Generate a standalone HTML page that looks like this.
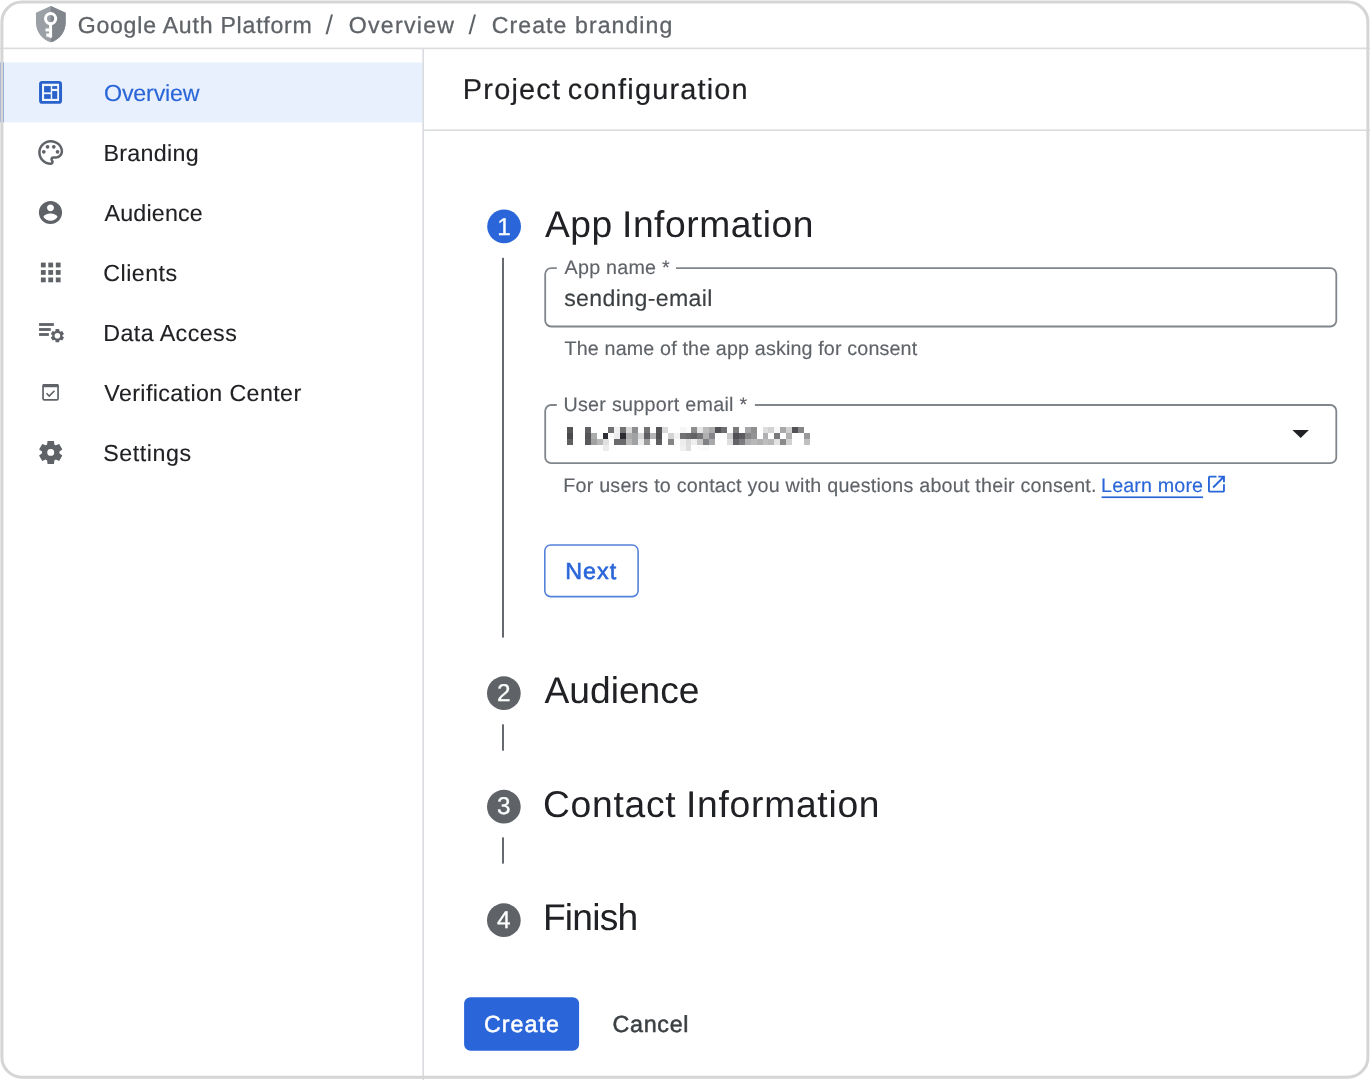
<!DOCTYPE html>
<html lang="en">
<head>
<meta charset="utf-8">
<title>Google Auth Platform - Create branding</title>
<style>
html,body{margin:0;padding:0;}
body{width:1370px;height:1080px;position:relative;overflow:hidden;background:#ffffff;font-family:"Liberation Sans",Arial,sans-serif;}
.a{position:absolute;}
.t{position:absolute;white-space:pre;text-rendering:geometricPrecision;font-family:"Liberation Sans",Arial,sans-serif;font-weight:400;}
svg{position:absolute;overflow:visible;}
.num{position:absolute;text-rendering:geometricPrecision;width:34px;text-align:center;color:#fff;font-size:24.3px;line-height:34px;-webkit-text-stroke:0.3px #fff;font-family:"Liberation Sans",Arial,sans-serif;}
#h1{left:77.65px;top:9.80px;font-size:23.1px;line-height:31px;letter-spacing:0.772px;color:#5f6368;-webkit-text-stroke:0.3px #5f6368;}
#h2{left:325.41px;top:7.04px;font-size:27px;line-height:36px;letter-spacing:0.000px;color:#5f6368;}
#h3{left:348.67px;top:9.80px;font-size:23.1px;line-height:31px;letter-spacing:1.306px;color:#5f6368;-webkit-text-stroke:0.3px #5f6368;}
#h4{left:468.49px;top:7.04px;font-size:27px;line-height:36px;letter-spacing:0.000px;color:#5f6368;}
#h5{left:491.75px;top:9.80px;font-size:23.1px;line-height:31px;letter-spacing:1.069px;color:#5f6368;-webkit-text-stroke:0.3px #5f6368;}
#s1{left:104.00px;top:78.14px;font-size:23.25px;line-height:31px;letter-spacing:-0.178px;color:#2a66d8;-webkit-text-stroke:0.15px #2a66d8;}
#s2{left:103.49px;top:138.14px;font-size:23.25px;line-height:31px;letter-spacing:0.316px;color:#202124;-webkit-text-stroke:0.12px #202124;}
#s3{left:104.54px;top:198.14px;font-size:23.25px;line-height:31px;letter-spacing:0.185px;color:#202124;-webkit-text-stroke:0.12px #202124;}
#s4{left:103.26px;top:258.14px;font-size:23.25px;line-height:31px;letter-spacing:0.463px;color:#202124;-webkit-text-stroke:0.12px #202124;}
#s5{left:103.21px;top:318.14px;font-size:23.25px;line-height:31px;letter-spacing:0.433px;color:#202124;-webkit-text-stroke:0.12px #202124;}
#s6{left:104.31px;top:378.14px;font-size:23.25px;line-height:31px;letter-spacing:0.382px;color:#202124;-webkit-text-stroke:0.12px #202124;}
#s7{left:103.31px;top:438.14px;font-size:23.25px;line-height:31px;letter-spacing:0.540px;color:#202124;-webkit-text-stroke:0.12px #202124;}
#pc{left:462.87px;top:71.09px;font-size:28.9px;line-height:38px;letter-spacing:1.196px;color:#202124;word-spacing:-2.5px;-webkit-text-stroke:0.2px #202124;}
#t1{left:544.88px;top:199.51px;font-size:37.2px;line-height:49px;letter-spacing:0.538px;color:#202124;word-spacing:-1.5px;}
#t2{left:544.56px;top:665.91px;font-size:37.2px;line-height:49px;letter-spacing:-0.015px;color:#202124;}
#t3{left:543.00px;top:780.21px;font-size:37.2px;line-height:49px;letter-spacing:0.750px;color:#202124;word-spacing:-1.5px;}
#t4{left:542.95px;top:892.61px;font-size:37.2px;line-height:49px;letter-spacing:-0.789px;color:#202124;}
#l1{left:564.59px;top:255.17px;font-size:19.7px;line-height:26px;letter-spacing:0.245px;color:#5f6368;-webkit-text-stroke:0.15px #5f6368;}
#v1{left:564.16px;top:283.20px;font-size:23.1px;line-height:31px;letter-spacing:0.372px;color:#3c4043;-webkit-text-stroke:0.15px #3c4043;}
#d1{left:564.60px;top:336.07px;font-size:19.7px;line-height:26px;letter-spacing:0.152px;color:#5f6368;-webkit-text-stroke:0.15px #5f6368;}
#l2{left:563.48px;top:392.47px;font-size:19.7px;line-height:26px;letter-spacing:0.281px;color:#5f6368;-webkit-text-stroke:0.15px #5f6368;}
#d2{left:563.24px;top:473.37px;font-size:19.7px;line-height:26px;letter-spacing:0.228px;color:#5f6368;-webkit-text-stroke:0.15px #5f6368;}
#lm{left:1101.04px;top:473.37px;font-size:19.7px;line-height:26px;letter-spacing:0.149px;color:#2a66d8;-webkit-text-stroke:0.15px #2a66d8;}
#nx{left:565.33px;top:555.63px;font-size:23.3px;line-height:31px;letter-spacing:0.966px;color:#2a66d9;-webkit-text-stroke:0.6px #2a66d9;}
#cr{left:484.00px;top:1008.53px;font-size:23.3px;line-height:31px;letter-spacing:1.021px;color:#ffffff;-webkit-text-stroke:0.5px #ffffff;}
#cn{left:612.46px;top:1008.53px;font-size:23.3px;line-height:31px;letter-spacing:0.714px;color:#3c4043;-webkit-text-stroke:0.5px #3c4043;}
</style>
</head>
<body>
<svg class="a" style="left:0;top:0" width="1370" height="1080" viewBox="0 0 1370 1080">
<!-- sidebar selection -->
<rect x="0" y="62.5" width="4.1" height="59.8" fill="#7594da"/>
<rect x="4" y="62.5" width="418.6" height="59.8" fill="#e8effd"/>
<!-- separators -->
<rect x="0" y="47.55" width="1370" height="1.65" fill="#dadce0"/>
<rect x="422.35" y="49" width="1.7" height="1031" fill="#dadce0"/>
<rect x="424" y="129.4" width="946" height="1.65" fill="#dadce0"/>
<!-- stepper -->
<circle cx="504.1" cy="226.4" r="16.9" fill="#2a66d9"/>
<circle cx="503.85" cy="693.2" r="16.85" fill="#5f6368"/>
<circle cx="503.85" cy="806.7" r="16.85" fill="#5f6368"/>
<circle cx="503.85" cy="920.2" r="16.85" fill="#5f6368"/>
<rect x="502.05" y="257.8" width="1.9" height="379.8" fill="#5f6368"/>
<rect x="502.05" y="724.3" width="1.9" height="26.4" fill="#5f6368"/>
<rect x="502.05" y="837.4" width="1.9" height="26.2" fill="#5f6368"/>
<!-- inputs -->
<rect x="545.2" y="268.1" width="791.1" height="58.4" rx="6" fill="none" stroke="#80868b" stroke-width="1.8"/>
<rect x="556.8" y="266.4" width="119.2" height="3.6" fill="#fff"/>
<rect x="545.2" y="405" width="791.1" height="58.2" rx="6" fill="none" stroke="#80868b" stroke-width="1.8"/>
<rect x="556.8" y="403.3" width="198.1" height="3.6" fill="#fff"/>
<path d="M1292.4 430h16.5l-8.25 8.05z" fill="#202124"/>
<!-- buttons -->
<rect x="544.8" y="545" width="93.3" height="51.6" rx="5.8" fill="#fff" stroke="#5482da" stroke-width="1.6"/>
<rect x="464.1" y="997.2" width="115" height="53.5" rx="6.4" fill="#2a66d9"/>
<rect x="1101.6" y="496.4" width="101.5" height="1.7" fill="#2a66d8"/>
</svg>

<svg class="a" style="left:0;top:0" width="1370" height="1080" viewBox="0 0 1370 1080">
<defs>
<clipPath id="rh"><rect x="50.8" y="0" width="30" height="48"/></clipPath>
</defs>
<!-- shield key logo -->
<g transform="translate(31 4.4) scale(1.65)">
<path d="M12 1L3 5v6c0 5.55 3.84 10.74 9 12 5.160-1.260 9-6.450 9-12V5l-9-4z" fill="#9aa0a6"/>
</g>
<g clip-path="url(#rh)"><g transform="translate(31 4.4) scale(1.65)">
<path d="M12 1L3 5v6c0 5.55 3.84 10.74 9 12 5.160-1.260 9-6.450 9-12V5l-9-4z" fill="#80868b"/>
</g></g>
<circle cx="50.6" cy="18.6" r="5.1" fill="none" stroke="#fff" stroke-width="3"/>
<path d="M49.1 23.6h3v13.4l-1.3 1.2-1.7-1.2z" fill="#fff"/>
<rect x="45.5" y="28.4" width="4" height="3" fill="#fff"/>
<path d="M46.3 33.5h3.2v4.2l-1.4-.9h-1.8z" fill="#fff"/>

<!-- overview (dashboard) icon -->
<rect x="40.55" y="82.38" width="20" height="20" rx="1.6" fill="#f0f4fd" stroke="#2962cb" stroke-width="2.96"/>
<rect x="44.07" y="86.07" width="6.67" height="6.3" fill="#2962cb"/>
<rect x="44.07" y="94.2" width="6.67" height="4.65" fill="#2962cb"/>
<rect x="52.2" y="86.07" width="5" height="2.8" fill="#2962cb"/>
<rect x="52.2" y="91.07" width="5" height="7.78" fill="#2962cb"/>

<!-- branding (palette) -->
<g transform="translate(35.65 137.46) scale(1.25)" fill="#5f6368">
<path d="M12 22C6.490 22 2 17.510 2 12S6.490 2 12 2s10 4.040 10 9c0 3.310-2.690 6-6 6h-1.770c-.28 0-.5.22-.5.5 0 .12.050.23.130.33.41.47.64 1.060.64 1.670A2.500 2.500 0 0 1 12 22zm0-18c-4.410 0-8 3.590-8 8s3.590 8 8 8c.28 0 .5-.22.5-.5a.54.54 0 0 0-.140-.35c-.41-.46-.63-1.050-.63-1.650a2.500 2.500 0 0 1 2.500-2.500H16c2.210 0 4-1.790 4-4 0-3.860-3.590-7-8-7z"/>
<circle cx="6.5" cy="11.5" r="1.5"/><circle cx="9.5" cy="7.5" r="1.5"/><circle cx="14.5" cy="7.5" r="1.5"/><circle cx="17.5" cy="11.5" r="1.5"/>
</g>

<!-- audience (account circle) -->
<g transform="translate(36.58 198.58) scale(1.16)" fill="#5f6368">
<path d="M12 2C6.480 2 2 6.480 2 12s4.480 10 10 10 10-4.480 10-10S17.520 2 12 2zm0 3c1.660 0 3 1.340 3 3s-1.340 3-3 3-3-1.340-3-3 1.340-3 3-3zm0 14.200c-2.500 0-4.710-1.280-6-3.220.030-1.990 4-3.080 6-3.080 1.990 0 5.970 1.090 6 3.080-1.290 1.940-3.500 3.220-6 3.220z"/>
</g>

<!-- clients (apps grid) -->
<g fill="#5f6368">
<rect x="40.9" y="262.6" width="4.8" height="4.8"/><rect x="48.3" y="262.6" width="4.8" height="4.8"/><rect x="55.8" y="262.6" width="4.8" height="4.8"/>
<rect x="40.9" y="270.05" width="4.8" height="4.8"/><rect x="48.3" y="270.05" width="4.8" height="4.8"/><rect x="55.8" y="270.05" width="4.8" height="4.8"/>
<rect x="40.9" y="277.5" width="4.8" height="4.8"/><rect x="48.3" y="277.5" width="4.8" height="4.8"/><rect x="55.8" y="277.5" width="4.8" height="4.8"/>
</g>

<!-- data access (list + gear) -->
<g fill="#5f6368">
<rect x="39.07" y="323.1" width="14.8" height="2.8"/>
<rect x="39.07" y="328.1" width="11.7" height="2.8"/>
<rect x="39.07" y="333.1" width="9.8" height="2.8"/>
</g>
<g transform="translate(57.4 335.7)">
<circle r="3.9" fill="none" stroke="#5f6368" stroke-width="2.2"/>
<g fill="#5f6368">
<path id="gt" d="M-1.75 -6.6h3.5l.45 2.8h-4.4z"/>
<path d="M-1.75 -6.6h3.5l.45 2.8h-4.4z" transform="rotate(60)"/>
<path d="M-1.75 -6.6h3.5l.45 2.8h-4.4z" transform="rotate(120)"/>
<path d="M-1.75 -6.6h3.5l.45 2.8h-4.4z" transform="rotate(180)"/>
<path d="M-1.75 -6.6h3.5l.45 2.8h-4.4z" transform="rotate(240)"/>
<path d="M-1.75 -6.6h3.5l.45 2.8h-4.4z" transform="rotate(300)"/>
</g>
</g>

<!-- verification center -->
<rect x="43.05" y="384.9" width="15" height="15" rx="1.4" fill="none" stroke="#5f6368" stroke-width="1.7"/>
<rect x="42.6" y="384.05" width="15.9" height="3.1" rx="1" fill="#5f6368"/>
<path d="M46.5 393.3l2.76 2.77 5.18-5.37" fill="none" stroke="#5f6368" stroke-width="1.6"/>

<!-- settings gear -->
<g transform="translate(36.81 438.6) scale(1.16 1.15)">
<path fill="#5f6368" fill-rule="evenodd" d="m9.25 22-.4-3.200q-.325-.125-.612-.3-.288-.175-.563-.375L4.700 19.375l-2.750-4.750 2.575-1.950Q4.500 12.500 4.500 12.337v-.675q0-.162.025-.337L1.950 9.375l2.750-4.750 2.975 1.250q.275-.2.575-.375.3-.175.6-.3l.4-3.200h5.500l.4 3.200q.325.125.613.3.287.175.562.375l2.975-1.250 2.750 4.750-2.575 1.950q.025.175.025.337v.675q0 .163-.05.338l2.575 1.950-2.750 4.750-2.950-1.250q-.275.2-.575.375-.3.175-.6.3l-.4 3.200ZM12 15a3 3 0 1 0 0-6 3 3 0 0 0 0 6Z"/>
</g>

<!-- open in new -->
<g transform="translate(1205.18 472.88) scale(0.939)">
<path fill="#2a66d8" d="M19 19H5V5h7V3H5a2 2 0 0 0-2 2v14a2 2 0 0 0 2 2h14c1.100 0 2-.9 2-2v-7h-2v7zM14 3v2h3.590l-9.830 9.830 1.410 1.410L19 6.410V10h2V3h-7z"/>
</g>
</svg>

<svg class="a" style="left:0;top:0" width="1370" height="1080" viewBox="0 0 1370 1080" shape-rendering="crispEdges">
<rect x="567.00" y="427.00" width="5.97" height="6.02" fill="#555558"/>
<rect x="567.00" y="432.97" width="5.97" height="6.02" fill="#4a4a4d"/>
<rect x="567.00" y="438.94" width="5.97" height="6.02" fill="#606063"/>
<rect x="584.77" y="427.00" width="5.97" height="6.02" fill="#606063"/>
<rect x="584.77" y="432.97" width="5.97" height="6.02" fill="#555558"/>
<rect x="584.77" y="438.94" width="5.97" height="6.02" fill="#5a5a5d"/>
<rect x="590.70" y="432.97" width="5.97" height="6.02" fill="#aaabab"/>
<rect x="590.70" y="438.94" width="5.97" height="6.02" fill="#a0a1a3"/>
<rect x="596.62" y="438.94" width="5.97" height="6.02" fill="#b8b8b9"/>
<rect x="602.55" y="432.97" width="5.97" height="6.02" fill="#2e2f36"/>
<rect x="602.55" y="438.94" width="5.97" height="6.02" fill="#e0e0e0"/>
<rect x="602.55" y="444.91" width="5.97" height="6.02" fill="#ececec"/>
<rect x="608.48" y="427.00" width="5.97" height="6.02" fill="#707073"/>
<rect x="608.48" y="432.97" width="5.97" height="6.02" fill="#fafafa"/>
<rect x="614.40" y="427.00" width="5.97" height="6.02" fill="#f0f0f0"/>
<rect x="614.40" y="432.97" width="5.97" height="6.02" fill="#ececec"/>
<rect x="614.40" y="438.94" width="5.97" height="6.02" fill="#6a6a6d"/>
<rect x="620.33" y="427.00" width="5.97" height="6.02" fill="#727275"/>
<rect x="620.33" y="432.97" width="5.97" height="6.02" fill="#2a2b30"/>
<rect x="620.33" y="438.94" width="5.97" height="6.02" fill="#6a6a6d"/>
<rect x="626.25" y="427.00" width="5.97" height="6.02" fill="#dadada"/>
<rect x="626.25" y="432.97" width="5.97" height="6.02" fill="#ababac"/>
<rect x="626.25" y="438.94" width="5.97" height="6.02" fill="#b8b8b9"/>
<rect x="632.17" y="427.00" width="5.97" height="6.02" fill="#8e8e90"/>
<rect x="632.17" y="432.97" width="5.97" height="6.02" fill="#a0a1a3"/>
<rect x="632.17" y="438.94" width="5.97" height="6.02" fill="#a0a1a3"/>
<rect x="638.10" y="427.00" width="5.97" height="6.02" fill="#fdfdfd"/>
<rect x="638.10" y="432.97" width="5.97" height="6.02" fill="#d6d6d7"/>
<rect x="638.10" y="438.94" width="5.97" height="6.02" fill="#ececec"/>
<rect x="644.02" y="427.00" width="5.97" height="6.02" fill="#727275"/>
<rect x="644.02" y="432.97" width="5.97" height="6.02" fill="#606063"/>
<rect x="644.02" y="438.94" width="5.97" height="6.02" fill="#9a9a9c"/>
<rect x="649.95" y="432.97" width="5.97" height="6.02" fill="#b5b5b7"/>
<rect x="655.88" y="427.00" width="5.97" height="6.02" fill="#555558"/>
<rect x="655.88" y="432.97" width="5.97" height="6.02" fill="#505053"/>
<rect x="655.88" y="438.94" width="5.97" height="6.02" fill="#5e5e61"/>
<rect x="661.80" y="427.00" width="5.97" height="6.02" fill="#dadada"/>
<rect x="667.73" y="432.97" width="5.97" height="6.02" fill="#d2d4d4"/>
<rect x="667.73" y="438.94" width="5.97" height="6.02" fill="#858587"/>
<rect x="673.65" y="432.97" width="5.97" height="6.02" fill="#f2f2f2"/>
<rect x="673.65" y="438.94" width="5.97" height="6.02" fill="#fcfcfc"/>
<rect x="679.58" y="427.00" width="5.97" height="6.02" fill="#f6f6f6"/>
<rect x="679.58" y="432.97" width="5.97" height="6.02" fill="#727275"/>
<rect x="679.58" y="438.94" width="5.97" height="6.02" fill="#ededed"/>
<rect x="679.58" y="444.91" width="5.97" height="6.02" fill="#f0f0f0"/>
<rect x="685.50" y="427.00" width="5.97" height="6.02" fill="#fcfcfc"/>
<rect x="685.50" y="432.97" width="5.97" height="6.02" fill="#6a6a6d"/>
<rect x="685.50" y="438.94" width="5.97" height="6.02" fill="#dcdcdc"/>
<rect x="685.50" y="444.91" width="5.97" height="6.02" fill="#dedede"/>
<rect x="691.42" y="427.00" width="5.97" height="6.02" fill="#8e8e90"/>
<rect x="691.42" y="432.97" width="5.97" height="6.02" fill="#636366"/>
<rect x="691.42" y="438.94" width="5.97" height="6.02" fill="#eef0ef"/>
<rect x="697.35" y="427.00" width="5.97" height="6.02" fill="#e6e6e6"/>
<rect x="697.35" y="432.97" width="5.97" height="6.02" fill="#757578"/>
<rect x="697.35" y="438.94" width="5.97" height="6.02" fill="#c8c8c9"/>
<rect x="697.35" y="444.91" width="5.97" height="6.02" fill="#fcfcfc"/>
<rect x="703.27" y="427.00" width="5.97" height="6.02" fill="#bcbcbd"/>
<rect x="703.27" y="432.97" width="5.97" height="6.02" fill="#b0b0b1"/>
<rect x="703.27" y="438.94" width="5.97" height="6.02" fill="#808184"/>
<rect x="703.27" y="444.91" width="5.97" height="6.02" fill="#fafafa"/>
<rect x="709.20" y="427.00" width="5.97" height="6.02" fill="#aaaaab"/>
<rect x="709.20" y="432.97" width="5.97" height="6.02" fill="#858689"/>
<rect x="709.20" y="438.94" width="5.97" height="6.02" fill="#a8a9ab"/>
<rect x="715.12" y="427.00" width="5.97" height="6.02" fill="#525256"/>
<rect x="721.05" y="427.00" width="5.97" height="6.02" fill="#6e6e71"/>
<rect x="726.98" y="432.97" width="5.97" height="6.02" fill="#cacaca"/>
<rect x="726.98" y="438.94" width="5.97" height="6.02" fill="#dedede"/>
<rect x="732.90" y="427.00" width="5.97" height="6.02" fill="#7a7a7d"/>
<rect x="732.90" y="432.97" width="5.97" height="6.02" fill="#505054"/>
<rect x="732.90" y="438.94" width="5.97" height="6.02" fill="#636468"/>
<rect x="738.83" y="432.97" width="5.97" height="6.02" fill="#5c5c60"/>
<rect x="738.83" y="438.94" width="5.97" height="6.02" fill="#7c7c7f"/>
<rect x="744.75" y="427.00" width="5.97" height="6.02" fill="#a6a6a8"/>
<rect x="744.75" y="432.97" width="5.97" height="6.02" fill="#858588"/>
<rect x="744.75" y="438.94" width="5.97" height="6.02" fill="#aeaeb0"/>
<rect x="750.67" y="427.00" width="5.97" height="6.02" fill="#8e8e90"/>
<rect x="750.67" y="432.97" width="5.97" height="6.02" fill="#929294"/>
<rect x="750.67" y="438.94" width="5.97" height="6.02" fill="#b8b8b9"/>
<rect x="756.60" y="438.94" width="5.97" height="6.02" fill="#b0b0b1"/>
<rect x="762.52" y="427.00" width="5.97" height="6.02" fill="#dedede"/>
<rect x="762.52" y="432.97" width="5.97" height="6.02" fill="#b0b0b2"/>
<rect x="762.52" y="438.94" width="5.97" height="6.02" fill="#bebebf"/>
<rect x="768.45" y="427.00" width="5.97" height="6.02" fill="#d2d2d2"/>
<rect x="768.45" y="438.94" width="5.97" height="6.02" fill="#b8b8b9"/>
<rect x="774.38" y="427.00" width="5.97" height="6.02" fill="#f8f8f8"/>
<rect x="774.38" y="432.97" width="5.97" height="6.02" fill="#7a7a7d"/>
<rect x="774.38" y="438.94" width="5.97" height="6.02" fill="#e2e2e2"/>
<rect x="780.30" y="427.00" width="5.97" height="6.02" fill="#a8a8a9"/>
<rect x="780.30" y="438.94" width="5.97" height="6.02" fill="#8a8a8d"/>
<rect x="786.23" y="427.00" width="5.97" height="6.02" fill="#d0d0d0"/>
<rect x="786.23" y="432.97" width="5.97" height="6.02" fill="#b0b0b1"/>
<rect x="786.23" y="438.94" width="5.97" height="6.02" fill="#d0d0d0"/>
<rect x="792.15" y="427.00" width="5.97" height="6.02" fill="#525256"/>
<rect x="798.08" y="427.00" width="5.97" height="6.02" fill="#858588"/>
<rect x="804.00" y="432.97" width="5.97" height="6.02" fill="#9a9a9c"/>
<rect x="804.00" y="438.94" width="5.97" height="6.02" fill="#c0c0c1"/>
</svg>
<div id="txt" style="position:absolute;left:0;top:0;width:1370px;height:1080px;will-change:transform">
<div class="num" style="left:486.9px;top:210.6px">1</div>
<div class="num" style="left:486.85px;top:677.1px">2</div>
<div class="num" style="left:486.85px;top:790px">3</div>
<div class="num" style="left:486.85px;top:903.5px">4</div>
<header>
<span class="t" id="h1">Google Auth Platform</span>
<span class="t" id="h2">/</span>
<span class="t" id="h3">Overview</span>
<span class="t" id="h4">/</span>
<span class="t" id="h5">Create branding</span>
</header>
<nav>
<span class="t" id="s1">Overview</span>
<span class="t" id="s2">Branding</span>
<span class="t" id="s3">Audience</span>
<span class="t" id="s4">Clients</span>
<span class="t" id="s5">Data Access</span>
<span class="t" id="s6">Verification Center</span>
<span class="t" id="s7">Settings</span>
</nav>
<main>
<span class="t" id="pc">Project configuration</span>
<span class="t" id="t1">App Information</span>
<span class="t" id="t2">Audience</span>
<span class="t" id="t3">Contact Information</span>
<span class="t" id="t4">Finish</span>
<span class="t" id="l1">App name *</span>
<span class="t" id="v1">sending-email</span>
<span class="t" id="d1">The name of the app asking for consent</span>
<span class="t" id="l2">User support email *</span>
<span class="t" id="d2">For users to contact you with questions about their consent.</span>
<span class="t" id="lm">Learn more</span>
<span class="t" id="nx">Next</span>
<span class="t" id="cr">Create</span>
<span class="t" id="cn">Cancel</span>
</main>
</div>
<svg class="a" style="left:0;top:0;z-index:20" width="1370" height="1080" viewBox="0 0 1370 1080">
<rect x="1.9" y="2.05" width="1366" height="1075.1" rx="20" fill="none" stroke="#d5d5d5" stroke-width="3"/>
</svg>

</body>
</html>
